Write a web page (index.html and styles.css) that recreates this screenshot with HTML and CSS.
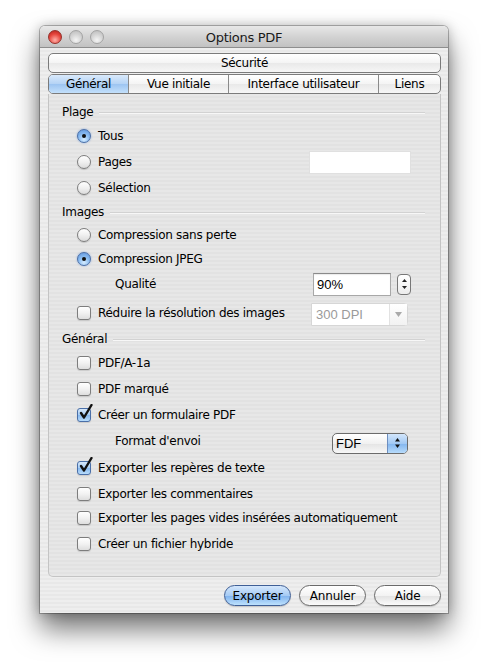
FILE: index.html
```html
<!DOCTYPE html>
<html>
<head>
    <meta charset="utf-8">
    <link rel="stylesheet" href="styles.css">
</head>
<body>
    <div class="window">
        <div class="titlebar">
            <div class="lights">
                <span class="light close"></span>
                <span class="light"></span>
                <span class="light"></span>
            </div>
            <div class="title">Options PDF</div>
            <div></div>
        </div>

        <div class="window-body">
            <div class="tabs">
                <div class="tab-row">
                    <div class="tab">Sécurité</div>
                </div>
                <div class="tab-row">
                    <div class="tab selected tab-general">Général</div>
                    <div class="tab tab-vue">Vue initiale</div>
                    <div class="tab tab-ui">Interface utilisateur</div>
                    <div class="tab">Liens</div>
                </div>
            </div>

            <div class="panel">
                <div class="section-head"><span>Plage</span></div>
                <div class="row">
                    <span class="radio on"></span><span class="label">Tous</span>
                </div>
                <div class="row">
                    <span class="radio"></span><span class="label">Pages</span>
                    <span class="field field-pages"></span>
                </div>
                <div class="row">
                    <span class="radio"></span><span class="label">Sélection</span>
                </div>

                <div class="section-head"><span>Images</span></div>
                <div class="row compact">
                    <span class="radio"></span><span class="label">Compression sans perte</span>
                </div>
                <div class="row compact">
                    <span class="radio on"></span><span class="label">Compression JPEG</span>
                </div>
                <div class="row">
                    <span class="label indent">Qualité</span>
                    <span class="field field-quality">90%</span>
                    <span class="stepper">
                        <svg width="7" height="16" viewBox="0 0 7 16">
                            <path d="M1 6 L3.5 3 L6 6 Z" fill="#222"/>
                            <path d="M1 10 L3.5 13 L6 10 Z" fill="#222"/>
                        </svg>
                    </span>
                </div>
                <div class="row wide">
                    <span class="check"></span><span class="label">Réduire la résolution des images</span>
                    <span class="combo disabled">
                        <span class="combo-text">300 DPI</span>
                        <span class="combo-arrow">
                            <svg width="7" height="5" viewBox="0 0 7 5"><path d="M0 0 L7 0 L3.5 5 Z" fill="#aaa"/></svg>
                        </span>
                    </span>
                </div>

                <div class="section-head"><span>Général</span></div>
                <div class="row">
                    <span class="check"></span><span class="label">PDF/A-1a</span>
                </div>
                <div class="row">
                    <span class="check"></span><span class="label">PDF marqué</span>
                </div>
                <div class="row">
                    <span class="check on"></span><span class="label">Créer un formulaire PDF</span>
                </div>
                <div class="row">
                    <span class="label indent">Format d'envoi</span>
                    <span class="popup">
                        <span class="popup-text">FDF</span>
                        <span class="popup-arrows">
                            <svg width="7" height="12" viewBox="0 0 7 12">
                                <path d="M1 4.5 L3.5 1 L6 4.5 Z" fill="#111"/>
                                <path d="M1 7.5 L3.5 11 L6 7.5 Z" fill="#111"/>
                            </svg>
                        </span>
                    </span>
                </div>
                <div class="row loose">
                    <span class="check on"></span><span class="label">Exporter les repères de texte</span>
                </div>
                <div class="row compact">
                    <span class="check"></span><span class="label">Exporter les commentaires</span>
                </div>
                <div class="row compact">
                    <span class="check"></span><span class="label">Exporter les pages vides insérées automatiquement</span>
                </div>
                <div class="row loose">
                    <span class="check"></span><span class="label">Créer un fichier hybride</span>
                </div>
            </div>

            <div class="buttons">
                <button class="button default">Exporter</button>
                <button class="button">Annuler</button>
                <button class="button">Aide</button>
            </div>
        </div>
    </div>
</body>
</html>
```

FILE: styles.css
```css
body {
    margin: 0;
    padding: 26px 0 0 40px;
    min-height: 100vh;
    box-sizing: border-box;
    background: #ffffff;
    font-family: "DejaVu Sans", "Liberation Sans", sans-serif;
    font-size: 12px;
    letter-spacing: -0.3px;
    color: #000;
}

.window {
    width: 408px;
    height: 587px;
    display: flex;
    flex-direction: column;
    border-radius: 5px 5px 0 0;
    box-shadow: 0 16px 28px rgba(0, 0, 0, 0.55), 0 0 12px rgba(0, 0, 0, 0.25), 0 0 0 1px rgba(0, 0, 0, 0.25);
    overflow: hidden;
}

/* title bar */
.titlebar {
    height: 21px;
    display: grid;
    grid-template-columns: 1fr auto 1fr;
    align-items: center;
    background: linear-gradient(#e8e8e8, #d3d3d3 50%, #c2c2c2);
    border-bottom: 1px solid #8e8e8e;
}

.lights {
    display: flex;
    gap: 7px;
    padding-left: 8px;
}

.light {
    width: 14px;
    height: 14px;
    border-radius: 50%;
    box-sizing: border-box;
    border: 1px solid #a3a3a3;
    background: radial-gradient(circle at 50% 75%, #f4f4f4, #d2d2d2 55%, #b9b9b9);
}

.light.close {
    border-color: #94302a;
    background: radial-gradient(circle at 50% 75%, #ffb0a8, #e6463d 55%, #b0201a);
}

.title {
    font-size: 13px;
    padding-top: 1px;
    color: #1a1a1a;
}

/* body with pinstripes */
.window-body {
    flex: 1;
    padding: 5px 7px 0 8px;
    background: repeating-linear-gradient(#eeeeee 0, #eeeeee 2px, #e8e8e8 2px, #e8e8e8 4px);
    display: flex;
    flex-direction: column;
}

/* segmented tab rows */
.tabs {
    display: flex;
    flex-direction: column;
    gap: 1px;
    position: relative;
    z-index: 1;
}

.tab-row {
    display: flex;
    height: 20px;
    box-sizing: border-box;
    border: 1px solid #7b7b7b;
    border-radius: 5px;
    overflow: hidden;
    background: linear-gradient(#ffffff, #f4f4f4 50%, #e9e9e9 51%, #f6f6f6);
}

.tab {
    flex: 1;
    box-sizing: border-box;
    display: flex;
    align-items: center;
    justify-content: center;
    font-size: 12px;
    border-left: 1px solid #8a8a8a;
}

.tab:first-child {
    border-left: none;
}

.tab-general {
    flex: 0 0 79px;
}

.tab-vue {
    flex: 0 0 100px;
}

.tab-ui {
    flex: 0 0 150px;
}

.tab.selected {
    background: linear-gradient(#d9e9fb, #b4d3f5 50%, #9cc4f1 51%, #c3e0fb);
}

/* content panel */
.panel {
    height: 483px;
    box-sizing: border-box;
    border: 1px solid #c4c4c4;
    border-top: none;
    border-radius: 0 0 5px 5px;
    padding: 7px 15px 0 13px;
    background: repeating-linear-gradient(#e7e7e7 0, #e7e7e7 2px, #e2e2e2 2px, #e2e2e2 4px);
}

.section-head {
    height: 22px;
    display: flex;
    align-items: center;
    gap: 6px;
}

.section-head::after {
    content: "";
    flex: 1;
    height: 1px;
    margin-top: 1px;
    background: #d2d2d2;
    border-bottom: 1px solid #f7f7f7;
}

.row {
    height: 26px;
    display: flex;
    align-items: center;
    padding: 0 14px 0 15px;
}

.row.compact {
    height: 24px;
}

.row.loose {
    height: 28px;
}

.row.wide {
    height: 31px;
}

.label {
    margin-left: 7px;
}

.label.indent {
    margin-left: 38px;
}

/* radio buttons */
.radio {
    width: 14px;
    height: 14px;
    box-sizing: border-box;
    border-radius: 50%;
    border: 1px solid #7d7d7d;
    background: linear-gradient(#ffffff, #f0f0f0 50%, #dcdcdc);
    box-shadow: 0 1px 1px rgba(0, 0, 0, 0.15);
    flex: none;
    position: relative;
}

.radio.on {
    border-color: #4a6fa8;
    background: radial-gradient(circle at 50% 80%, #d5ecff, #8ebff2 45%, #5d93db);
    box-shadow: 0 0 2px rgba(60, 120, 210, 0.6);
}

.radio.on::after {
    content: "";
    position: absolute;
    left: 4px;
    top: 4px;
    width: 4px;
    height: 4px;
    border-radius: 50%;
    background: #111;
}

/* checkboxes */
.check {
    width: 14px;
    height: 14px;
    box-sizing: border-box;
    border-radius: 3px;
    border: 1px solid #7d7d7d;
    background: linear-gradient(#ffffff, #f2f2f2 50%, #dedede);
    box-shadow: 0 1px 1px rgba(0, 0, 0, 0.12);
    flex: none;
    position: relative;
}

.check.on {
    border-color: #4a6fa8;
    background: linear-gradient(#d6e8fb, #a5ccf4 50%, #86b8ef 51%, #b8dcfb);
}

.check.on::after {
    content: "";
    position: absolute;
    left: 1px;
    top: -5px;
    width: 14px;
    height: 16px;
    background: url("data:image/svg+xml;utf8,<svg xmlns='http://www.w3.org/2000/svg' width='14' height='16'><path d='M2 9 L5 13.5 L12.5 1' stroke='%23111' stroke-width='2.4' fill='none' stroke-linecap='round' stroke-linejoin='round'/></svg>") no-repeat;
}

/* text fields */
.field {
    box-sizing: border-box;
    height: 23px;
    background: #fff;
    border: 1px solid #a8a8a8;
    border-top-color: #8a8a8a;
    box-shadow: inset 0 1px 1px rgba(0, 0, 0, 0.08);
    display: flex;
    align-items: center;
    padding-left: 3px;
    font-family: "Liberation Sans", sans-serif;
    font-size: 13px;
    letter-spacing: 0;
}

.field-pages {
    margin-left: auto;
    width: 102px;
    border-color: #e0e0e0;
    box-shadow: none;
}

.field-quality {
    margin-left: auto;
    width: 78px;
}

.stepper {
    margin: 0 0 0 6px;
    width: 14px;
    height: 21px;
    box-sizing: border-box;
    border: 1px solid #777;
    border-radius: 4px;
    background: linear-gradient(#ffffff, #ececec);
    display: flex;
    align-items: center;
    justify-content: center;
}

/* disabled combo box */
.combo {
    margin-left: auto;
    margin-right: 3px;
    margin-top: 3px;
    width: 97px;
    height: 23px;
    box-sizing: border-box;
    display: flex;
    border: 1px solid #d6d6d6;
    border-radius: 0 4px 4px 0;
    background: #fff;
    font-family: "Liberation Sans", sans-serif;
    font-size: 13px;
    letter-spacing: 0;
}

.combo-text {
    flex: 1;
    display: flex;
    align-items: center;
    padding-left: 4px;
    color: #9a9a9a;
}

.combo-arrow {
    width: 17px;
    border-left: 1px solid #e2e2e2;
    display: flex;
    align-items: center;
    justify-content: center;
    background: linear-gradient(#ffffff, #f2f2f2);
}

/* pop-up button */
.popup {
    margin-left: auto;
    margin-right: 3px;
    margin-top: 4px;
    width: 76px;
    height: 21px;
    box-sizing: border-box;
    display: flex;
    border: 1px solid #6b6b6b;
    border-radius: 5px;
    overflow: hidden;
    background: linear-gradient(#ffffff, #f1f1f1 50%, #e4e4e4 51%, #f7f7f7);
    font-family: "Liberation Sans", sans-serif;
    font-size: 13px;
    letter-spacing: 0;
}

.popup-text {
    flex: 1;
    display: flex;
    align-items: center;
    padding-left: 3px;
}

.popup-arrows {
    width: 19px;
    display: flex;
    align-items: center;
    justify-content: center;
    border-left: 1px solid #6d8ebf;
    background: linear-gradient(#d3e6fb, #a2c9f4 50%, #82b5ef 51%, #b7dbfb);
}

/* bottom buttons */
.buttons {
    display: flex;
    justify-content: flex-end;
    gap: 8px;
    margin-top: 8px;
}

.button {
    width: 67px;
    height: 21px;
    padding: 0;
    font-family: "DejaVu Sans", sans-serif;
    font-size: 12px;
    letter-spacing: -0.2px;
    color: #000;
    border: 1px solid #6a6a6a;
    border-radius: 11px;
    background: linear-gradient(#ffffff, #f3f3f3 50%, #e2e2e2 51%, #fbfbfb);
    box-shadow: 0 1px 1px rgba(0, 0, 0, 0.15);
}

.button.default {
    border-color: #3f5f96;
    background: linear-gradient(#d4e7fc, #a6cbf4 50%, #7fb2ee 51%, #bde1fd);
}
```
